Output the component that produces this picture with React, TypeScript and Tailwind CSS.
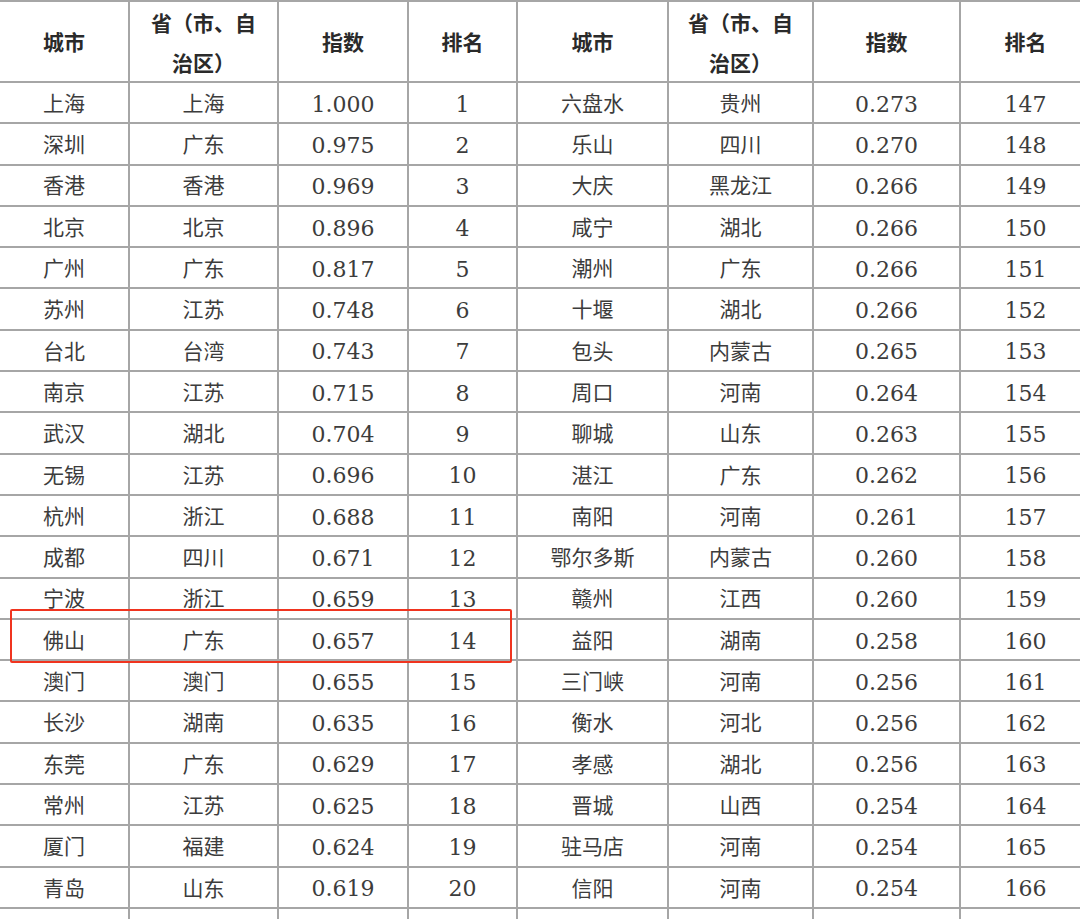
import React from "react";

const left: [string, string, string, string][] = [
  ["上海", "上海", "1.000", "1"],
  ["深圳", "广东", "0.975", "2"],
  ["香港", "香港", "0.969", "3"],
  ["北京", "北京", "0.896", "4"],
  ["广州", "广东", "0.817", "5"],
  ["苏州", "江苏", "0.748", "6"],
  ["台北", "台湾", "0.743", "7"],
  ["南京", "江苏", "0.715", "8"],
  ["武汉", "湖北", "0.704", "9"],
  ["无锡", "江苏", "0.696", "10"],
  ["杭州", "浙江", "0.688", "11"],
  ["成都", "四川", "0.671", "12"],
  ["宁波", "浙江", "0.659", "13"],
  ["佛山", "广东", "0.657", "14"],
  ["澳门", "澳门", "0.655", "15"],
  ["长沙", "湖南", "0.635", "16"],
  ["东莞", "广东", "0.629", "17"],
  ["常州", "江苏", "0.625", "18"],
  ["厦门", "福建", "0.624", "19"],
  ["青岛", "山东", "0.619", "20"],
  ["泉州", "福建", "0.614", "21"],
];

const right: [string, string, string, string][] = [
  ["六盘水", "贵州", "0.273", "147"],
  ["乐山", "四川", "0.270", "148"],
  ["大庆", "黑龙江", "0.266", "149"],
  ["咸宁", "湖北", "0.266", "150"],
  ["潮州", "广东", "0.266", "151"],
  ["十堰", "湖北", "0.266", "152"],
  ["包头", "内蒙古", "0.265", "153"],
  ["周口", "河南", "0.264", "154"],
  ["聊城", "山东", "0.263", "155"],
  ["湛江", "广东", "0.262", "156"],
  ["南阳", "河南", "0.261", "157"],
  ["鄂尔多斯", "内蒙古", "0.260", "158"],
  ["赣州", "江西", "0.260", "159"],
  ["益阳", "湖南", "0.258", "160"],
  ["三门峡", "河南", "0.256", "161"],
  ["衡水", "河北", "0.256", "162"],
  ["孝感", "湖北", "0.256", "163"],
  ["晋城", "山西", "0.254", "164"],
  ["驻马店", "河南", "0.254", "165"],
  ["信阳", "河南", "0.254", "166"],
  ["周口", "河南", "0.253", "167"],
];

const cjk = "font-['Noto_Sans_CJK_SC','Noto_Sans',sans-serif]";
const num = "font-['DejaVu_Serif','Liberation_Serif',serif]";

function HeadCell({ children }: { children: React.ReactNode }) {
  return (
    <div className={`bg-white flex flex-col items-center justify-center text-[21px] font-bold text-[#2a2a2a] ${cjk}`}>
      {children}
    </div>
  );
}

function ProvHead() {
  return (
    <div className={`bg-white flex flex-col items-center justify-center gap-[12px] text-[21px] leading-[28px] font-bold text-[#2a2a2a] ${cjk}`}>
      <span>省（市、自</span>
      <span>治区）</span>
    </div>
  );
}

function TextCell({ children }: { children: React.ReactNode }) {
  return (
    <div className={`bg-white flex items-center justify-center text-[21px] text-[#3c3c3c] ${cjk}`}>
      {children}
    </div>
  );
}

function NumCell({ children }: { children: React.ReactNode }) {
  return (
    <div className={`bg-white flex items-center justify-center pt-[3px] text-[22px] text-[#3c3c3c] ${num}`}>
      {children}
    </div>
  );
}

export default function App() {
  return (
    <div className="relative w-[1080px] h-[919px] overflow-hidden bg-white">
      <div
        className="grid bg-[#a6a6a6] pt-[2px] gap-[2px] w-[1090px]"
        style={{
          gridTemplateColumns: "128px 147px 128px 107px 149px 143px 145px 1fr",
          gridTemplateRows: "79px repeat(21, 39.3px)",
        }}
      >
        <HeadCell>城市</HeadCell>
        <ProvHead />
        <HeadCell>指数</HeadCell>
        <HeadCell>排名</HeadCell>
        <HeadCell>城市</HeadCell>
        <ProvHead />
        <HeadCell>指数</HeadCell>
        <HeadCell>排名</HeadCell>
        {left.map((l, i) => {
          const r = right[i];
          return (
            <React.Fragment key={i}>
              <TextCell>{l[0]}</TextCell>
              <TextCell>{l[1]}</TextCell>
              <NumCell>{l[2]}</NumCell>
              <NumCell>{l[3]}</NumCell>
              <TextCell>{r[0]}</TextCell>
              <TextCell>{r[1]}</TextCell>
              <NumCell>{r[2]}</NumCell>
              <NumCell>{r[3]}</NumCell>
            </React.Fragment>
          );
        })}
      </div>
      <div className="absolute left-[10px] top-[609px] w-[502px] h-[54px] border-2 border-[#f0341f] rounded-[2px]" />
    </div>
  );
}
